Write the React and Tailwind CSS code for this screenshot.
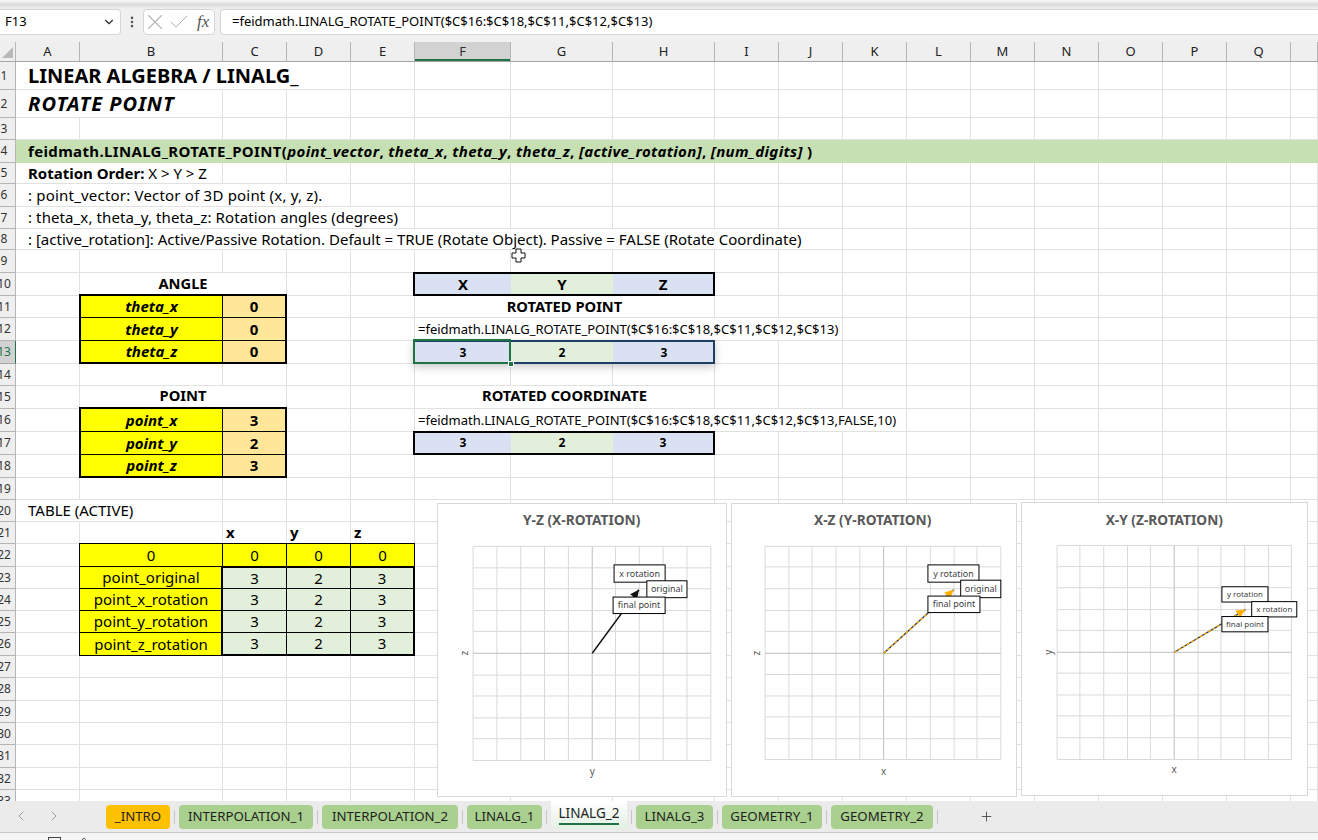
import { Check, ChevronDown, ChevronLeft, ChevronRight, EllipsisVertical, Plus, Settings, X } from "lucide-react";

const colNames = ["A", "B", "C", "D", "E", "F", "G", "H", "I", "J", "K", "L", "M", "N", "O", "P", "Q", ""];
const gridCols = "grid grid-rows-[100%] grid-cols-[16px_64px_143px_64px_64px_64px_96px_102px_102px_64px_64px_64px_64px_64px_64px_64px_64px_64px_27px]";

const heights = [28, 28, 22, 23, 21, 23, 22, 21, 23, 23, 22, 23, 23, 22, 23, 23, 23, 23, 22, 22, 22, 23, 22, 22, 22, 23, 22, 23, 22, 22, 23, 22, 22];

// label cells of the yellow input tables
const inputCell = "justify-center bg-[#ffff00] font-bold italic text-[15px] -ml-px";
const valueCell = "justify-center bg-[#ffe699] font-bold text-[15px]";
const blue = "justify-center bg-[#d9e1f2] font-bold";
const green = "justify-center bg-[#e2efda] font-bold";
const yellowRow = "justify-center bg-[#ffff00] text-[15px] border-r border-b border-black -mt-px";
const greenNum = "justify-center bg-[#e2efda] text-[15px]";
const formula = "pl-[3px] text-[13px]";
const heading = "justify-center font-bold text-[14.7px]";

const cellsByRow = {
  1: [{ c: 0, s: 4, k: "pl-3 text-[20px] font-bold", t: "LINEAR ALGEBRA / LINALG_" }],
  2: [{ c: 0, s: 2, k: "pl-3 text-[20px] font-bold italic tracking-[1px]", t: "ROTATE POINT" }],
  4: [
    {
      c: 0,
      s: 18,
      k: "pl-3 text-[15px] font-bold tracking-[0.35px] bg-[#c6e0b4] border-r-0 border-b-0",
      t: (
        <>
          feidmath.LINALG_ROTATE_POINT(<i>point_vector</i>, <i>theta_x</i>, <i>theta_y</i>, <i>theta_z</i>, <i>[active_rotation]</i>, <i>[num_digits]</i> )
        </>
      ),
    },
  ],
  5: [
    {
      c: 0,
      s: 2,
      k: "pl-3 text-[15px]",
      t: (
        <>
          <b>Rotation Order:</b> X &gt; Y &gt; Z
        </>
      ),
    },
  ],
  6: [{ c: 0, s: 4, k: "pl-3 text-[15px] tracking-[0.2px]", t: ": point_vector: Vector of 3D point (x, y, z)." }],
  7: [{ c: 0, s: 5, k: "pl-3 text-[15px] tracking-[0.1px]", t: ": theta_x, theta_y, theta_z: Rotation angles (degrees)" }],
  8: [{ c: 0, s: 10, k: "pl-3 text-[15px]", t: ": [active_rotation]: Active/Passive Rotation. Default = TRUE (Rotate Object). Passive = FALSE (Rotate Coordinate)" }],
  10: [
    { c: 1, s: 2, k: `${heading} pb-[2px]`, t: "ANGLE" },
    { c: 5, k: `${blue} text-[15px] -ml-[2px] -mt-px border-l-2 border-t-2 border-b-2 border-r-0 border-black`, t: "X" },
    { c: 6, k: `${green} text-[15px] -mt-px border-t-2 border-b-2 border-r-0 border-black`, t: "Y" },
    { c: 7, k: `${blue} text-[15px] -mt-px border-t-2 border-b-2 border-r-2 border-black`, t: "Z" },
  ],
  11: [
    { c: 1, k: `${inputCell} -mt-[2px] border-l-2 border-t-2 border-r border-b border-black`, t: "theta_x" },
    { c: 2, k: `${valueCell} -mt-[2px] border-t-2 border-r-2 border-b border-black`, t: "0" },
    { c: 5, s: 3, k: heading, t: "ROTATED POINT" },
  ],
  12: [
    { c: 1, k: `${inputCell} border-l-2 border-r border-b border-black`, t: "theta_y" },
    { c: 2, k: `${valueCell} border-r-2 border-b border-black`, t: "0" },
    { c: 5, s: 5, k: formula, t: "=feidmath.LINALG_ROTATE_POINT($C$16:$C$18,$C$11,$C$12,$C$13)" },
  ],
  13: [
    { c: 1, k: `${inputCell} border-l-2 border-r border-b-2 border-black`, t: "theta_z" },
    { c: 2, k: `${valueCell} border-r-2 border-b-2 border-black`, t: "0" },
    { c: 5, k: `${blue} text-[12px] border-r-0 border-b-0`, t: "3" },
    { c: 6, k: `${green} text-[12px] border-r-0 border-b-0`, t: "2" },
    { c: 7, k: `${blue} text-[12px] border-r-0 border-b-0`, t: "3" },
  ],
  15: [
    { c: 1, s: 2, k: `${heading} pb-[3px]`, t: "POINT" },
    { c: 5, s: 3, k: `${heading} pb-[3px]`, t: "ROTATED COORDINATE" },
  ],
  16: [
    { c: 1, k: `${inputCell} -mt-[2px] border-l-2 border-t-2 border-r border-b border-black`, t: "point_x" },
    { c: 2, k: `${valueCell} -mt-[2px] border-t-2 border-r-2 border-b border-black`, t: "3" },
    { c: 5, s: 6, k: formula, t: "=feidmath.LINALG_ROTATE_POINT($C$16:$C$18,$C$11,$C$12,$C$13,FALSE,10)" },
  ],
  17: [
    { c: 1, k: `${inputCell} border-l-2 border-r border-b border-black`, t: "point_y" },
    { c: 2, k: `${valueCell} border-r-2 border-b border-black`, t: "2" },
    { c: 5, k: `${blue} text-[12px] -ml-[2px] -mt-px border-l-2 border-t-2 border-b-2 border-r-0 border-black`, t: "3" },
    { c: 6, k: `${green} text-[12px] -mt-px border-t-2 border-b-2 border-r-0 border-black`, t: "2" },
    { c: 7, k: `${blue} text-[12px] -mt-px border-t-2 border-b-2 border-r-2 border-black`, t: "3" },
  ],
  18: [
    { c: 1, k: `${inputCell} border-l-2 border-r border-b-2 border-black`, t: "point_z" },
    { c: 2, k: `${valueCell} border-r-2 border-b-2 border-black`, t: "3" },
  ],
  20: [{ c: 0, s: 2, k: "pl-3 text-[15px]", t: "TABLE (ACTIVE)" }],
  21: [
    { c: 2, k: "pl-[3px] font-bold text-[15px]", t: "x" },
    { c: 3, k: "pl-[3px] font-bold text-[15px]", t: "y" },
    { c: 4, k: "pl-[3px] font-bold text-[15px]", t: "z" },
  ],
  22: [
    { c: 1, k: `${yellowRow} -ml-px border-l border-t`, t: "0" },
    { c: 2, k: `${yellowRow} border-t`, t: "0" },
    { c: 3, k: `${yellowRow} border-t`, t: "0" },
    { c: 4, k: `${yellowRow} border-t`, t: "0" },
  ],
  23: tableRow("point_original", "-mt-px border-t-2", "border-b"),
  24: tableRow("point_x_rotation", "", "border-b"),
  25: tableRow("point_y_rotation", "", "border-b"),
  26: tableRow("point_z_rotation", "", "border-b-2"),
};

function tableRow(name, top, bottom) {
  const nums = ["3", "2", "3"];
  return [
    { c: 1, k: "justify-center bg-[#ffff00] text-[15px] -ml-px border-l border-r border-b border-black", t: name },
    { c: 2, k: `${greenNum} -ml-[2px] border-l-2 border-r ${top} ${bottom} border-black`, t: nums[0] },
    { c: 3, k: `${greenNum} border-r ${top} ${bottom} border-black`, t: nums[1] },
    { c: 4, k: `${greenNum} border-r-2 ${top} ${bottom} border-black`, t: nums[2] },
  ];
}

function SheetRow({ n, h }) {
  const given = cellsByRow[n] || [];
  const out = [];
  let col = 0;
  while (col < 18) {
    const cell = given.find((g) => g.c === col);
    const span = cell?.s || 1;
    out.push(
      <div
        key={col}
        style={{ gridColumn: `span ${span}` }}
        className={`flex min-h-0 items-center whitespace-nowrap border-r border-b border-[#e1e1e1] leading-none ${cell?.k || ""}`}
      >
        <span>{cell?.t}</span>
      </div>
    );
    col += span;
  }
  const active = n === 13;
  return (
    <div className={gridCols} style={{ height: h }}>
      <div
        className={`overflow-hidden border-r border-b text-[12px] ${
          active ? "bg-[#d2d2d2] text-[#217346] border-r-[#217346] border-b-[#a6a6a6]" : "bg-[#efefef] text-[#333333] border-[#b5b5b5]"
        }`}
      >
        <div className="flex h-full w-[8px] items-center justify-center whitespace-nowrap">{n}</div>
      </div>
      {out}
    </div>
  );
}

const charts = [
  {
    panel: "left-[437px] top-[441px] w-[290px] h-[294px]",
    view: "437 441 290 294",
    title: "Y-Z (X-ROTATION)",
    titleX: 581.7,
    xs: [472.3, 496.3, 520.3, 544.3, 568.3, 592.3, 615.7, 639.7, 663.7, 687.7, 711.7],
    ys: [483.7, 505.3, 526.3, 548.3, 569.3, 591.3, 613.3, 634.3, 656.3, 677.3, 699.3],
    tip: [639.3, 527.3],
    color: "#111111",
    dash: false,
    axisX: ["y", 592.3, 711],
    axisY: ["z", 464, 591.3],
    fs: 9,
    labels: [
      ["x rotation", 614.3, 502.3, 51.4, 17.4],
      ["original", 647.3, 518.3, 40.4, 17],
      ["final point", 613.3, 534.7, 52.4, 16.6],
    ],
  },
  {
    panel: "left-[731px] top-[441px] w-[286px] h-[294px]",
    view: "731 441 286 294",
    title: "X-Z (Y-ROTATION)",
    titleX: 872.7,
    xs: [764.3, 788.3, 811.7, 835.7, 859.7, 883.7, 906.7, 930.7, 954.7, 977.7, 1001.7],
    ys: [483.7, 504.3, 526.3, 548.3, 569.3, 591.3, 612.7, 634.3, 655.3, 677.3, 698.3],
    tip: [954.3, 527.3],
    color: "#ffb000",
    dash: true,
    axisX: ["x", 883.7, 711],
    axisY: ["z", 756, 591.3],
    fs: 9,
    labels: [
      ["y rotation", 928.3, 502.3, 51.4, 17.4],
      ["original", 961.3, 517.7, 40.4, 17.6],
      ["final point", 928.3, 533.7, 52.4, 16.6],
    ],
  },
  {
    panel: "left-[1021px] top-[440px] w-[287px] h-[294px]",
    view: "1021 440 287 294",
    title: "X-Y (Z-ROTATION)",
    titleX: 1164.3,
    xs: [1056.3, 1079.3, 1103.3, 1127.3, 1150.3, 1174.3, 1198.3, 1221.3, 1245.3, 1269.3, 1292.3],
    ys: [482.7, 504, 525.3, 547.3, 568.3, 590.3, 611.3, 633.3, 654.3, 676.3, 698.3],
    tip: [1246, 547.3],
    color: "#ffb000",
    dash: true,
    axisX: ["x", 1174.3, 709],
    axisY: ["y", 1048, 590.3],
    fs: 8,
    labels: [
      ["y rotation", 1222.3, 524.3, 46.4, 15.4],
      ["x rotation", 1252.3, 539.3, 45.4, 15.4],
      ["final point", 1222.3, 554.3, 46.4, 15.4],
    ],
  },
];

function Chart({ d }) {
  const [x0, y0] = [d.xs[5], d.ys[5]];
  const [tx, ty] = d.tip;
  const ang = Math.atan2(ty - y0, tx - x0);
  const head = (r, a) => `${tx + r * Math.cos(ang + a)},${ty + r * Math.sin(ang + a)}`;
  return (
    <div className={`absolute border border-[#d9d9d9] bg-white ${d.panel}`}>
      <svg width="100%" height="100%" viewBox={d.view} className="block" fontFamily="'Noto Sans', sans-serif">
        <text x={d.titleX} y={462} textAnchor="middle" fontSize="13.8" fontWeight="700" fill="#595959">
          {d.title}
        </text>
        {d.xs.map((x, i) => (
          <line key={i} x1={x} x2={x} y1={d.ys[0]} y2={d.ys[10]} stroke={i === 5 ? "#bdbdbd" : "#d9d9d9"} />
        ))}
        {d.ys.map((y, i) => (
          <line key={i} y1={y} y2={y} x1={d.xs[0]} x2={d.xs[10]} stroke={i === 5 ? "#bdbdbd" : "#d9d9d9"} />
        ))}
        {d.dash && <line x1={x0} y1={y0} x2={tx} y2={ty} stroke="#1f3864" strokeWidth="1.4" />}
        <line
          x1={x0}
          y1={y0}
          x2={tx}
          y2={ty}
          stroke={d.color}
          strokeWidth="1.4"
          strokeDasharray={d.dash ? "3 2" : undefined}
        />
        <polygon points={`${tx},${ty} ${head(10, Math.PI - 0.45)} ${head(10, Math.PI + 0.45)}`} fill={d.color} />
        <text x={d.axisX[1]} y={d.axisX[2] + 3} textAnchor="middle" fontSize="10" fill="#595959">
          {d.axisX[0]}
        </text>
        <text
          textAnchor="middle"
          fontSize="10"
          fill="#595959"
          transform={`translate(${d.axisY[1] + 3} ${d.axisY[2]}) rotate(-90)`}
        >
          {d.axisY[0]}
        </text>
        {d.labels.map(([t, x, y, w, h]) => (
          <g key={t}>
            <rect x={x} y={y} width={w} height={h} fill="white" stroke="black" strokeWidth="1" />
            <text x={x + w / 2} y={y + h / 2 + 3} textAnchor="middle" fontSize={d.fs} fill="#404040">
              {t}
            </text>
          </g>
        ))}
      </svg>
    </div>
  );
}

const tabs = [
  { t: "_INTRO", k: "w-[64px] bg-[#ffc000]" },
  { t: "INTERPOLATION_1", k: "w-[134px] bg-[#a9d08e]" },
  { t: "INTERPOLATION_2", k: "w-[136px] bg-[#a9d08e]" },
  { t: "LINALG_1", k: "w-[75px] bg-[#a9d08e]" },
  { t: "LINALG_2", active: true },
  { t: "LINALG_3", k: "w-[77px] bg-[#a9d08e]" },
  { t: "GEOMETRY_1", k: "w-[100px] bg-[#a9d08e]" },
  { t: "GEOMETRY_2", k: "w-[102px] bg-[#a9d08e]" },
];

export default function App() {
  return (
    <div className="flex h-[840px] w-[1318px] flex-col overflow-hidden bg-[#f0f0f0] font-['Noto_Sans',sans-serif] text-black">
      {/* formula bar */}
      <div className="h-[9px] bg-gradient-to-b from-[#f8f8f8] via-[#dcdcdc] to-[#f0f0f0]" />
      <div className="flex h-[26px] items-stretch text-[13px]">
        <div className="flex w-[121px] items-center justify-between rounded-r-[4px] border border-l-0 border-[#d6d6d6] bg-white pl-[5px] pr-[4px]">
          <span className="text-[13px]">F13</span>
          <ChevronDown size={14} strokeWidth={2} className="text-[#333333]" />
        </div>
        <div className="flex w-[22px] items-center justify-center text-[#555555]">
          <EllipsisVertical size={14} strokeWidth={2.5} />
        </div>
        <div className="flex w-[72px] items-center rounded-[4px] border border-[#d6d6d6] bg-white">
          <X size={26} strokeWidth={1} className="-ml-[2px] text-[#b4b4b4]" />
          <Check size={24} strokeWidth={1} className="-ml-[1px] text-[#b4b4b4]" />
          <span className="ml-[6px] font-['Liberation_Serif',serif] text-[17px] italic text-[#555555]">fx</span>
        </div>
        <div className="ml-[5px] flex flex-1 items-center rounded-l-[4px] border border-r-0 border-[#d6d6d6] bg-white pl-[11px]">
          <span className="text-[13px]">=feidmath.LINALG_ROTATE_POINT($C$16:$C$18,$C$11,$C$12,$C$13)</span>
        </div>
      </div>
      <div className="h-[7px]" />

      {/* column headers */}
      <div className={`${gridCols} h-[20px] border-b border-[#a6a6a6] bg-[#efefef] text-[13px]`}>
        <div className="flex items-end justify-end border-r border-[#b5b5b5] pb-[3px] pr-[2px]">
          <div className="h-0 w-0 border-b-[11px] border-l-[11px] border-b-[#b9b9b9] border-l-transparent" />
        </div>
        {colNames.map((c, i) => (
          <div
            key={i}
            className={`flex items-center justify-center border-r border-[#b5b5b5] text-[#222222] ${
              c === "F" ? "bg-[#d2d2d2] shadow-[inset_0_-2px_0_#217346] text-[#333333]" : ""
            }`}
          >
            {c}
          </div>
        ))}
      </div>

      {/* sheet */}
      <div className="relative flex-1 overflow-hidden bg-white">
        {heights.map((h, i) => (
          <SheetRow key={i} n={i + 1} h={h} />
        ))}

        {/* spilled range + selected cell */}
        <div className="absolute left-[413px] top-[278px] h-[24px] w-[302px] border-2 border-[#1c3f66] shadow-[0_3px_8px_rgba(0,0,0,0.22)]" />
        <div className="absolute left-[413px] top-[277px] h-[25px] w-[98px] border-2 border-[#217346]" />
        <div className="absolute left-[508px] top-[299px] h-[6px] w-[6px] border border-white bg-[#217346]" />

        {/* cursor */}
        <svg className="absolute left-[511px] top-[186px]" width="15" height="15" viewBox="0 0 15 15">
          <path d="M5 1h5v4h4v5h-4v4H5v-4H1V5h4z" fill="white" stroke="#111111" strokeWidth="1" />
        </svg>

        {charts.map((d) => (
          <Chart key={d.title} d={d} />
        ))}
      </div>

      {/* sheet tabs */}
      <div className="flex h-[32px] items-stretch border-b border-[#c8c8c8] bg-[#ebebeb]">
        <div className="flex w-[106px] items-center gap-[17px] pb-[1px] pl-[13px] text-[#a0a0a0]">
          <ChevronLeft size={16} strokeWidth={1.5} />
          <ChevronRight size={16} strokeWidth={1.5} />
        </div>
        {tabs.map((tab) => (
          <div key={tab.t} className="flex items-stretch">
            {tab.active ? (
              <div className="flex h-[28px] w-[76px] flex-col items-center rounded-b-[4px] bg-gradient-to-b from-white to-[#e3f0e3] pt-[3px] text-[13.5px] text-[#222222]">
                <span className="border-b-2 border-[#217346] leading-[19px]">{tab.t}</span>
              </div>
            ) : (
              <div className={`mt-[4px] flex h-[24px] items-center justify-center rounded-[4px] text-[13.25px] text-[#1f1f1f] ${tab.k}`}>{tab.t}</div>
            )}
            <div className="mx-[4px] mt-[9px] h-[14px] w-px bg-[#c6c6c6]" />
          </div>
        ))}
        <div className="ml-[37px] flex items-center text-[#444444]">
          <Plus size={15} strokeWidth={1.4} />
        </div>
      </div>
      <div className="relative flex h-[7px] items-start gap-[16px] overflow-hidden bg-[#f5f5f5] pl-[48px] pt-[4px] text-[#444444]">
        <div className="h-[12px] w-[13px] border border-[#444444]" />
        <Settings size={14} strokeWidth={1.4} />
      </div>
    </div>
  );
}
